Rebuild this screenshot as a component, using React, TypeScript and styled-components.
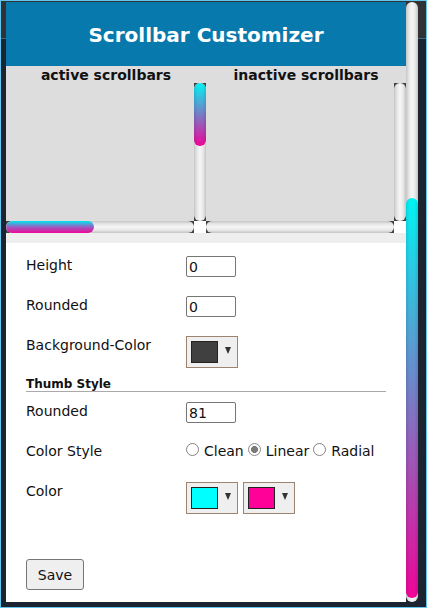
import React from "react";
import styled, { createGlobalStyle } from "styled-components";

const GlobalStyle = createGlobalStyle`
  html, body { margin: 0; padding: 0; width: 427px; height: 608px; overflow: hidden; background: #1b2430; }
  #root { width: 427px; height: 608px; }
  * { box-sizing: border-box; }
`;

const FONT = `"DejaVu Sans", Verdana, sans-serif`;

const Frame = styled.div`
  width: 427px;
  height: 608px;
  border: 1px solid #62c6ee;
  background: linear-gradient(to bottom, #303234 0, #303234 37px, #3b6a86 37px, #3b6a86 38px, #1b2430 38px);
  padding: 1px 7px 4px 5px;
  display: flex;
  font-family: ${FONT};
  color: #111;
`;

const Content = styled.div`
  width: 400px;
  height: 600px;
  display: flex;
  flex-direction: column;
  background: #fff;
`;

const Header = styled.header`
  height: 64px;
  flex: none;
  background: #0779ad;
  color: #fff;
  display: flex;
  align-items: center;
  justify-content: center;
  font-size: 20px;
  font-weight: bold;
  padding-top: 2px;
`;

const Preview = styled.section`
  display: flex;
  flex: none;
  background: #dddddd;
`;

const PreviewBox = styled.div`
  width: 200px;
  display: flex;
  flex-direction: column;
`;

const PreviewTitle = styled.div`
  height: 17px;
  padding-top: 1px;
  line-height: 16px;
  text-align: center;
  font-size: 14px;
  font-weight: bold;
  color: #111;
`;

const ScrollArea = styled.div`
  display: grid;
  grid-template-columns: 188px 12px;
  grid-template-rows: 138px 12px;
`;

const Viewport = styled.div`
  background: #dddddd;
`;

const Corner = styled.div`
  background: #fff;
`;

const Track = styled.div`
  background: #404040;
  display: flex;
`;

const Groove = styled.div<{ $vertical?: boolean }>`
  flex: 1;
  display: flex;
  flex-direction: ${(p) => (p.$vertical ? "column" : "row")};
  border-radius: 6px;
  overflow: hidden;
  background: linear-gradient(
    ${(p) => (p.$vertical ? "to right" : "to bottom")},
    #c6c6c6 0%,
    #e6e6e6 25%,
    #f6f6f6 50%,
    #e9e9e9 75%,
    #c4c4c4 100%
  );
`;

const Thumb = styled.div<{ $size: number; $vertical?: boolean; $offset?: number }>`
  flex: none;
  ${(p) => (p.$vertical ? `height: ${p.$size}px;` : `width: ${p.$size}px;`)}
  ${(p) => (p.$offset ? (p.$vertical ? `margin-top: ${p.$offset}px;` : `margin-left: ${p.$offset}px;`) : "")}
  border-radius: 6px;
  background:
    linear-gradient(
      ${(p) => (p.$vertical ? "to right" : "to bottom")},
      rgba(0, 0, 0, 0.1),
      rgba(255, 255, 255, 0) 30%,
      rgba(255, 255, 255, 0) 70%,
      rgba(0, 0, 0, 0.1)
    ),
    linear-gradient(to bottom, #00f4f4, #f00498);
  ${(p) =>
    !p.$vertical
      ? `background: linear-gradient(to bottom, #00e8ef, #9a5cc0 50%, #f00498);`
      : ""}
`;

const Strip = styled.div`
  height: 10px;
  flex: none;
  background: #eeeeee;
`;

const Form = styled.form`
  flex: 1;
  display: flex;
  flex-direction: column;
  padding: 13px 20px 0 20px;
`;

const Row = styled.div`
  display: grid;
  grid-template-columns: 160px auto;
  height: 40px;
  align-items: start;
`;

const Label = styled.label`
  font-size: 14px;
  line-height: 19px;
  color: #111;
`;

const NumberInput = styled.input`
  width: 50px;
  height: 21px;
  margin: 0;
  border: 1px solid #767676;
  border-radius: 2px;
  padding: 1px 2px;
  font-family: ${FONT};
  font-size: 14px;
  color: #111;
  background: #fff;
`;

const SectionTitle = styled.div`
  font-size: 12px;
  font-weight: bold;
  line-height: 14px;
  padding-top: 1px;
  border-bottom: 1px solid #aaaaaa;
  margin-bottom: 10px;
  color: #111;
`;

const ColorGroup = styled.div`
  display: flex;
  gap: 5px;
`;

const ColorButton = styled.button`
  width: 52px;
  height: 32px;
  margin: 0;
  border: 1px solid #9c8470;
  border-radius: 0;
  background: #efefef;
  padding: 0 0 0 4px;
  display: flex;
  align-items: center;
  gap: 7px;
`;

const Swatch = styled.span<{ $color: string }>`
  width: 27px;
  height: 22px;
  border: 1px solid #222;
  background: ${(p) => p.$color};
`;

const Arrow = styled.span`
  width: 0;
  height: 0;
  margin-bottom: 3px;
  border-left: 3px solid transparent;
  border-right: 3px solid transparent;
  border-top: 7px solid #333;
`;

const RadioGroup = styled.div`
  display: flex;
  align-items: flex-start;
`;

const RadioOption = styled.label`
  display: inline-flex;
  align-items: flex-start;
  gap: 5px;
  margin-right: 4px;
  font-size: 14px;
  line-height: 19px;
  color: #111;
`;

const Radio = styled.input`
  appearance: none;
  width: 13px;
  height: 13px;
  margin: 1px 0 0 0;
  border: 1px solid #858585;
  border-radius: 50%;
  background: #fff;
  &:checked {
    border-color: #8a8a8a;
    background: radial-gradient(circle, #7b7b7b 0, #7b7b7b 3.2px, #fff 3.8px);
  }
`;

const SaveButton = styled.button`
  align-self: flex-start;
  margin-top: 37px;
  width: 58px;
  height: 31px;
  padding: 0;
  border: 1px solid #767676;
  border-radius: 3px;
  background: #efefef;
  font-family: ${FONT};
  font-size: 14px;
  color: #111;
`;

const PageScroll = styled.div`
  width: 12px;
  height: 600px;
  display: flex;
`;

function ScrollPreview({ active }: { active: boolean }) {
  return (
    <ScrollArea>
      <Viewport />
      <Track>
        <Groove $vertical>{active && <Thumb $vertical $size={63} />}</Groove>
      </Track>
      <Track>
        <Groove>{active && <Thumb $size={88} />}</Groove>
      </Track>
      <Corner />
    </ScrollArea>
  );
}

function ColorPick({ color }: { color: string }) {
  return (
    <ColorButton type="button">
      <Swatch $color={color} />
      <Arrow />
    </ColorButton>
  );
}

export default function App() {
  return (
    <>
      <GlobalStyle />
      <Frame>
        <Content>
          <Header>Scrollbar Customizer</Header>
          <Preview>
            <PreviewBox>
              <PreviewTitle>active scrollbars</PreviewTitle>
              <ScrollPreview active />
            </PreviewBox>
            <PreviewBox>
              <PreviewTitle>inactive scrollbars</PreviewTitle>
              <ScrollPreview active={false} />
            </PreviewBox>
          </Preview>
          <Strip />
          <Form onSubmit={(e) => e.preventDefault()}>
            <Row>
              <Label>Height</Label>
              <NumberInput type="text" defaultValue="0" />
            </Row>
            <Row>
              <Label>Rounded</Label>
              <NumberInput type="text" defaultValue="0" />
            </Row>
            <Row>
              <Label>Background-Color</Label>
              <ColorGroup>
                <ColorPick color="#404040" />
              </ColorGroup>
            </Row>
            <SectionTitle>Thumb Style</SectionTitle>
            <Row>
              <Label>Rounded</Label>
              <NumberInput type="text" defaultValue="81" />
            </Row>
            <Row>
              <Label>Color Style</Label>
              <RadioGroup>
                <RadioOption>
                  <Radio type="radio" name="style" />
                  Clean
                </RadioOption>
                <RadioOption>
                  <Radio type="radio" name="style" defaultChecked />
                  Linear
                </RadioOption>
                <RadioOption>
                  <Radio type="radio" name="style" />
                  Radial
                </RadioOption>
              </RadioGroup>
            </Row>
            <Row>
              <Label>Color</Label>
              <ColorGroup>
                <ColorPick color="#00ffff" />
                <ColorPick color="#ff0099" />
              </ColorGroup>
            </Row>
            <SaveButton type="submit">Save</SaveButton>
          </Form>
        </Content>
        <PageScroll>
          <Groove $vertical>
            <Thumb $vertical $size={400} $offset={196} />
          </Groove>
        </PageScroll>
      </Frame>
    </>
  );
}
